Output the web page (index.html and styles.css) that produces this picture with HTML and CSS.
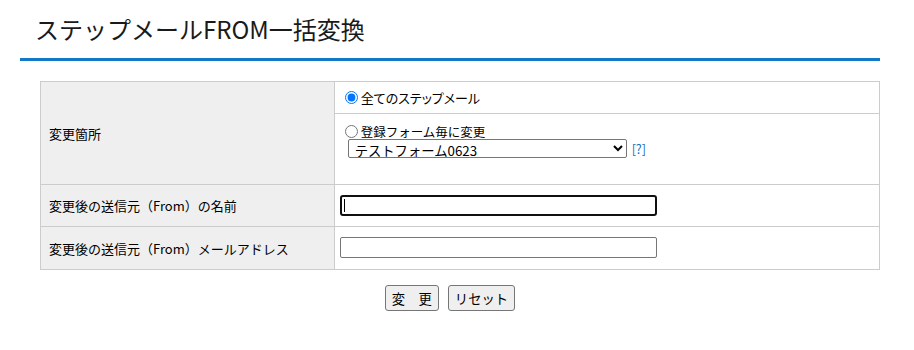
FILE: index.html
```html
<!DOCTYPE html>
<html lang="ja">
<head>
<meta charset="utf-8">
<title>ステップメールFROM一括変換</title>
<link rel="stylesheet" href="styles.css">
</head>
<body>
<div class="wrap">
  <h1 class="title">ステップメールFROM一括変換</h1>
  <form class="form">
    <table class="grid">
      <colgroup><col class="col-label"><col></colgroup>
      <tr>
        <th class="label">変更箇所</th>
        <td class="value value-options">
          <div class="opt opt-first">
            <label class="radio-line"><input type="radio" name="target" checked><span class="radio-text">全てのステップメール</span></label>
          </div>
          <div class="opt opt-second">
            <label class="radio-line"><input type="radio" name="target"><span class="radio-text">登録フォーム毎に変更</span></label>
            <div class="select-line">
              <select class="form-select"><option>テストフォーム0623</option></select>
              <a class="help" href="#">[?]</a>
            </div>
          </div>
        </td>
      </tr>
      <tr>
        <th class="label">変更後の送信元（From）の名前</th>
        <td class="value"><span class="field-wrap"><input type="text" class="text-input is-focused"><span class="caret"></span></span></td>
      </tr>
      <tr>
        <th class="label">変更後の送信元（From）メールアドレス</th>
        <td class="value value-last"><input type="text" class="text-input"></td>
      </tr>
    </table>
    <div class="actions">
      <button type="button" class="btn">変　更</button>
      <button type="reset" class="btn">リセット</button>
    </div>
  </form>
</div>
</body>
</html>
```
FILE: styles.css
```css
html, body {
  margin: 0;
  padding: 0;
  background: #fff;
}
body {
  font-family: "Noto Sans CJK JP", "Noto Sans", sans-serif;
  color: #000;
}
.wrap {
  margin-left: 20px;
  width: 860px;
}
.title {
  margin: 0;
  padding: 11px 0 11px 15px;
  font-size: 24px;
  line-height: 36px;
  font-weight: normal;
  color: #1a1a1a;
  border-bottom: 3px solid #1279c8;
}
.form {
  margin: 20px 0 0;
}
.grid {
  margin-left: 20px;
  width: 840px;
  border-collapse: collapse;
  font-size: 13px;
}
.col-label {
  width: 35%;
}
.grid th,
.grid td {
  border: 1px solid #cccccc;
}
.label {
  background: #efefef;
  text-align: left;
  font-weight: normal;
  padding: 0 8px;
  vertical-align: middle;
}
.value {
  padding: 10px 5px;
  background: #fff;
}
.value-last {
  padding-bottom: 11px;
}
.value-options {
  padding: 0;
}
.opt-first {
  height: 31px;
  border-bottom: 1px solid #cccccc;
  display: flex;
  align-items: center;
  padding: 0 5px;
}
.opt-second {
  padding: 10px 5px 26px;
}
.radio-line {
  display: flex;
  align-items: center;
  height: 15px;
  font-size: 12.5px;
}
.radio-line input {
  margin: 0 3px 0 5px;
  width: 13px;
  height: 13px;
}
.opt-first .radio-line {
  font-feature-settings: "palt";
  font-size: 13px;
}
.select-line {
  display: flex;
  align-items: center;
  height: 19px;
}
.form-select {
  margin: 0 0 0 8px;
  width: 279px;
  height: 19px;
  font-family: "Noto Sans CJK JP", sans-serif;
  font-size: 13.33px;
  border: 1px solid #767676;
  border-radius: 2px;
  background: #fff;
  color: #000;
  padding: 0 2px;
}
.help {
  margin-left: 5px;
  color: #1a6fc0;
  text-decoration: none;
  font-size: 12.5px;
}
.field-wrap {
  position: relative;
  display: inline-block;
  vertical-align: top;
}
.text-input {
  display: block;
  box-sizing: border-box;
  width: 317px;
  height: 21px;
  margin: 0;
  padding: 1px 3px;
  border: 1px solid #767676;
  border-radius: 2px;
  font-size: 13px;
  background: #fff;
}
.text-input.is-focused {
  border: 2px solid #101010;
  border-radius: 3px;
  outline: none;
}
.caret {
  position: absolute;
  left: 4px;
  top: 4px;
  width: 1px;
  height: 13px;
  background: #000;
}
.actions {
  display: flex;
  justify-content: center;
  gap: 9px;
  margin-top: 15px;
}
.btn {
  height: 26px;
  padding: 0 6px;
  font-family: "Noto Sans CJK JP", sans-serif;
  font-size: 13.33px;
  color: #000;
  background: #efefef;
  border: 1px solid #767676;
  border-radius: 3px;
}
```
